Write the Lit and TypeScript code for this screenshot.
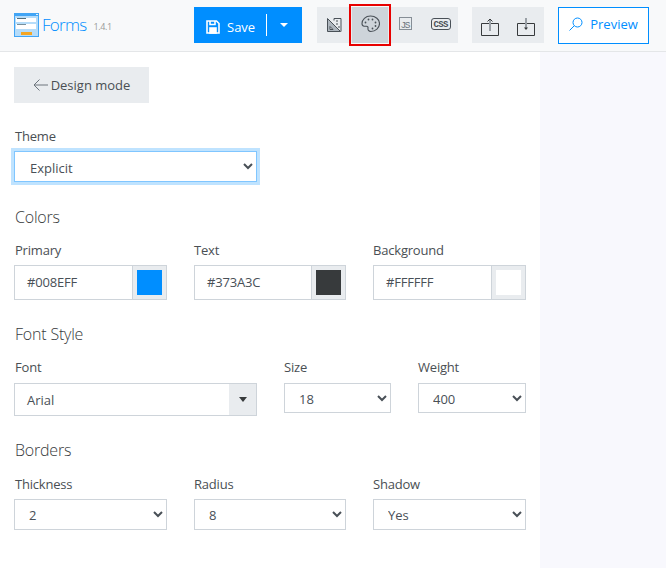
import { LitElement, css, html } from "lit";
import { customElement } from "lit/decorators.js";

@customElement("app-root")
export class AppRoot extends LitElement {
  static styles = css`
    :host {
      display: block;
      height: 568px;
      overflow: hidden;
      font-family: "Open Sans", "Noto Sans", sans-serif;
      font-size: 13px;
      color: #4a4f54;
      background: #fff;
    }

    * {
      box-sizing: border-box;
    }

    svg {
      display: block;
    }

    .topbar {
      display: flex;
      align-items: center;
      height: 52px;
      padding: 0 17px 1px 14px;
      background: #f8f9fa;
      border-bottom: 1px solid #e4e6e8;
    }

    .brand {
      display: flex;
      align-items: center;
      width: 180px;
    }

    .brand-name {
      margin: 0 0 2px 3px;
      font-size: 17px;
      font-weight: 300;
      letter-spacing: -0.7px;
      color: #008eff;
    }

    .brand-version {
      margin: 3px 0 0 7px;
      font-size: 9px;
      letter-spacing: -0.4px;
      color: #999;
    }

    .save {
      display: flex;
      align-items: center;
      width: 108px;
      height: 36px;
      padding-left: 12px;
      background: #008eff;
      color: #fff;
    }

    .save-icon {
      margin-top: 3px;
    }

    .save-label {
      width: 46px;
      padding: 3px 0 0 7px;
    }

    .save-split {
      width: 1px;
      height: 22px;
      background: #fff;
    }

    .save-caret {
      margin-left: 13px;
      margin-top: -1px;
    }

    .group {
      display: flex;
      height: 36px;
      background: #e9ecef;
    }

    .tools {
      margin-left: 15px;
    }

    .transfer {
      margin-left: 14px;
    }

    .tool {
      display: flex;
      align-items: center;
      justify-content: center;
      width: 35px;
      height: 36px;
      padding-bottom: 2px;
    }

    .tool.wide {
      width: 36px;
    }

    .tool.low {
      padding: 4px 0 0;
    }

    .tool.active {
      background: #ced4da;
      outline: 2px solid #e80000;
      outline-offset: 1px;
    }

    .tool text {
      font-family: "Liberation Mono", monospace;
    }

    .js-mark {
      font-size: 9.5px;
    }

    .css-mark {
      font-size: 9px;
      font-weight: 700;
    }

    .preview {
      display: flex;
      align-items: center;
      justify-content: center;
      gap: 7px;
      width: 91px;
      height: 37px;
      margin-left: 14px;
      padding-bottom: 2px;
      border: 1px solid #008eff;
      color: #008eff;
      background: #fff;
    }

    .body {
      display: flex;
      height: 516px;
    }

    .panel {
      width: 540px;
      padding: 15px 14px 0;
    }

    .aside {
      flex: 1;
      background: #f8f8fd;
    }

    .back {
      display: flex;
      align-items: center;
      justify-content: center;
      gap: 2px;
      width: 135px;
      height: 36px;
      background: #e9ecef;
    }

    .theme {
      width: 243px;
      margin-top: 24px;
      padding-bottom: 1px;
    }

    h3 {
      margin: 23px 0 0;
      padding-left: 1px;
      font-size: 16px;
      line-height: 22px;
      font-weight: 300;
      letter-spacing: -0.2px;
      color: #373a3c;
    }

    label {
      display: block;
      height: 18px;
      line-height: 18px;
      letter-spacing: -0.2px;
    }

    .theme label,
    .row > div:first-child label {
      padding-left: 1px;
    }

    .row {
      display: grid;
      gap: 27px;
      margin-top: 13px;
    }

    .row.last {
      margin-top: 14px;
    }

    .thirds {
      grid-template-columns: 153px 152px 153px;
    }

    .font-row {
      grid-template-columns: 1fr 107px 108px;
    }

    select {
      display: block;
      width: 100%;
      height: 31px;
      margin-top: 6px;
      padding: 1px 0 0 10px;
      font: inherit;
      color: #495057;
      background: #fff;
      border: 1px solid #ced4da;
      border-radius: 0;
    }

    .font-row select {
      height: 30px;
      margin-top: 7px;
    }

    .focused {
      padding: 3px 0 0 11px;
      border-color: #80c6ff;
      box-shadow: 0 0 0 3px #bfe3ff;
    }

    .swatch-input {
      display: flex;
      height: 35px;
      margin-top: 6px;
      border: 1px solid #ced4da;
    }

    .swatch-value {
      flex: 1;
      padding-left: 12px;
      line-height: 33px;
      letter-spacing: -0.2px;
      color: #495057;
    }

    .swatch-box {
      display: flex;
      align-items: center;
      justify-content: center;
      width: 34px;
      background: #e9ecef;
      border-left: 1px solid #ced4da;
    }

    .swatch {
      width: 25px;
      height: 25px;
    }

    .combo {
      display: flex;
      height: 33px;
      margin-top: 7px;
      border: 1px solid #ced4da;
    }

    .combo-value {
      flex: 1;
      padding-left: 12px;
      line-height: 33px;
      color: #495057;
    }

    .combo-arrow {
      display: flex;
      align-items: center;
      justify-content: center;
      width: 27px;
      background: #e9ecef;
    }
  `;

  private swatch(name: string, value: string) {
    return html`
      <div>
        <label>${name}</label>
        <div class="swatch-input">
          <div class="swatch-value">${value}</div>
          <div class="swatch-box">
            <div class="swatch" style="background:${value}"></div>
          </div>
        </div>
      </div>
    `;
  }

  private picker(name: string, value: string) {
    return html`
      <div>
        <label>${name}</label>
        <select><option>${value}</option></select>
      </div>
    `;
  }

  render() {
    return html`
      <div class="topbar">
        <div class="brand">
          <svg width="25" height="24" viewBox="0 0 25 24">
            <rect width="25" height="24" fill="#42a5f5" />
            <rect x="22" y="1" width="2" height="1" fill="#e3f2fd" />
            <rect x="1" y="3" width="23" height="20" fill="#b5dcf9" />
            <rect x="2" y="5" width="20" height="4" fill="#fff" />
            <rect x="2" y="11" width="20" height="5" fill="#fff" />
            <rect x="3" y="5" width="9" height="1" fill="#546e7a" />
            <rect x="3" y="11" width="9" height="1" fill="#78909c" />
            <rect x="7" y="19" width="11" height="3" fill="#f5a623" />
          </svg>
          <span class="brand-name">Forms</span>
          <span class="brand-version">1.4.1</span>
        </div>
        <div class="save">
          <svg class="save-icon" width="14" height="14" viewBox="0 0 14 14" fill="none" stroke="#fff" stroke-width="1.6">
            <path d="M1 1h9.500L13 3.500V13H1z" />
            <path d="M4 1v3.500h5V1" />
            <rect x="4" y="8" width="6" height="5" fill="#fff" />
          </svg>
          <span class="save-label">Save</span>
          <span class="save-split"></span>
          <svg class="save-caret" width="8" height="4" viewBox="0 0 8 4"><path d="M0 0h8L4 4z" fill="#fff" /></svg>
        </div>
        <div class="group tools">
          <div class="tool">
            <svg width="15" height="15" viewBox="0 0 15 15" fill="none" stroke="#495057">
              <path d="M.5 1.500l13 13H.5z" fill="#adb5bd" />
              <path d="M3 9.500v3h3z" fill="#e9ecef" />
              <path d="M7 1.500h7v13M7 1.500v2M9 4h2M9 7h2M11 10h2" />
            </svg>
          </div>
          <div class="tool wide active">
            <svg width="19" height="18" viewBox="0 0 19 18" fill="none" stroke="#495057" stroke-width="1.1">
              <path d="M9.500 1C4.500 1 1 4.600 1 8.600c0 1.800 1 2.600 2.200 2.600h2.300c1.200 0 1.700 1 1.500 2-.3 1.600.6 3.300 2.800 3.300 4.800 0 8.700-3.500 8.700-8C18.500 4.500 14.500 1 9.500 1z" />
              <g fill="#495057" stroke="none">
                <circle cx="4.500" cy="7.500" r=".9" />
                <circle cx="7.500" cy="4.500" r=".9" />
                <circle cx="11.500" cy="4.500" r=".9" />
                <circle cx="14.500" cy="7.500" r=".9" />
                <circle cx="14.500" cy="11" r=".9" />
                <circle cx="11.500" cy="13.500" r=".9" />
              </g>
            </svg>
          </div>
          <div class="tool">
            <svg width="14" height="14" viewBox="0 0 14 14" fill="none" stroke="#868e96">
              <rect x=".5" y=".5" width="12" height="12" />
              <text class="js-mark" x="1.500" y="11" fill="#6c757d" stroke="none" textLength="10">JS</text>
            </svg>
          </div>
          <div class="tool">
            <svg width="20" height="12" viewBox="0 0 20 12" fill="none" stroke="#495057">
              <rect x=".5" y=".5" width="19" height="11" rx="2.500" />
              <text class="css-mark" x="2.500" y="9" fill="#495057" stroke="none" textLength="15">CSS</text>
            </svg>
          </div>
        </div>
        <div class="group transfer">
          <div class="tool wide low">
            <svg width="18" height="18" viewBox="0 0 18 18" fill="none">
              <path d="M.5 5.500h17v12H.5z" stroke="#373a3c" />
              <path d="M9 13V1" stroke="#9aa0a6" stroke-width="2" />
              <path d="M6.500 3.500L9 1l2.500 2.500" stroke="#373a3c" />
            </svg>
          </div>
          <div class="tool wide low">
            <svg width="18" height="18" viewBox="0 0 18 18" fill="none">
              <path d="M.5 5.500h17v12H.5z" stroke="#373a3c" />
              <path d="M9 0v10" stroke="#9aa0a6" stroke-width="2" />
              <path d="M7 9.500h4L9 12z" fill="#373a3c" />
            </svg>
          </div>
        </div>
        <div class="preview">
          <svg width="14" height="14" viewBox="0 0 14 14" fill="none" stroke="#008eff">
            <circle cx="8.500" cy="5.500" r="4.500" />
            <path d="M5.300 8.700L.5 13.500" />
          </svg>
          <span>Preview</span>
        </div>
      </div>
      <div class="body">
        <div class="panel">
          <div class="back">
            <svg width="16" height="12" viewBox="0 0 16 12" fill="none" stroke="#6c757d">
              <path d="M15 6H1M6.500.5L1 6l5.500 5.500" />
            </svg>
            <span>Design mode</span>
          </div>
          <div class="theme">
            <label>Theme</label>
            <select class="focused"><option>Explicit</option></select>
          </div>
          <h3>Colors</h3>
          <div class="row thirds">
            ${this.swatch("Primary", "#008EFF")}
            ${this.swatch("Text", "#373A3C")}
            ${this.swatch("Background", "#FFFFFF")}
          </div>
          <h3>Font Style</h3>
          <div class="row font-row">
            <div>
              <label>Font</label>
              <div class="combo">
                <div class="combo-value">Arial</div>
                <div class="combo-arrow">
                  <svg width="8" height="5" viewBox="0 0 8 5"><path d="M0 0h8L4 5z" fill="#373a3c" /></svg>
                </div>
              </div>
            </div>
            ${this.picker("Size", "18")}
            ${this.picker("Weight", "400")}
          </div>
          <h3>Borders</h3>
          <div class="row thirds last">
            ${this.picker("Thickness", "2")}
            ${this.picker("Radius", "8")}
            ${this.picker("Shadow", "Yes")}
          </div>
        </div>
        <div class="aside"></div>
      </div>
    `;
  }
}
